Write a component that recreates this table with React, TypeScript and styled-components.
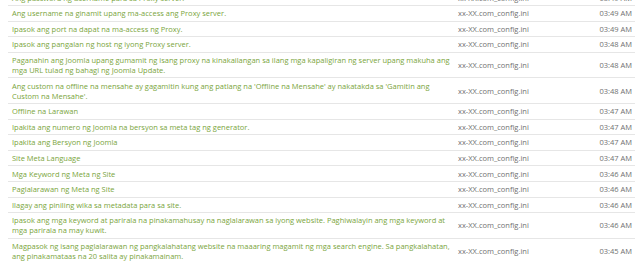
import React from "react";
import styled, { createGlobalStyle } from "styled-components";

const Global = createGlobalStyle`
  html, body { margin: 0; padding: 0; background: #ffffff; overflow: hidden; }
  body { font-family: "Open Sans", "Noto Sans", sans-serif; }
`;

const Page = styled.div`
  padding-left: 8px;
  width: 627px;
  margin-top: -10.6px;
`;

const Table = styled.table`
  width: 627px;
  border-collapse: collapse;
  table-layout: fixed;
  font-size: 7.5px;
  line-height: 10px;
`;

const Row = styled.tr``;

const Cell = styled.td<{ $kind: "desc" | "file" | "time" }>`
  border-top: 1px solid #e6e6e6;
  padding: 2.3px 3px 2.3px 4px;
  vertical-align: middle;
  color: ${(p) => (p.$kind === "desc" ? "#7aa53c" : "#707070")};
  text-align: ${(p) => (p.$kind === "time" ? "right" : "left")};
  white-space: ${(p) => (p.$kind === "desc" ? "normal" : "nowrap")};
`;

const rows: [string, string][] = [
  ["Ang password ng username para sa Proxy server.", "03:49 AM"],
  ["Ang username na ginamit upang ma-access ang Proxy server.", "03:49 AM"],
  ["Ipasok ang port na dapat na ma-access ng Proxy.", "03:49 AM"],
  ["Ipasok ang pangalan ng host ng iyong Proxy server.", "03:48 AM"],
  [
    "Paganahin ang Joomla upang gumamit ng isang proxy na kinakailangan sa ilang mga kapaligiran ng server upang makuha ang mga URL tulad ng bahagi ng Joomla Update.",
    "03:48 AM",
  ],
  [
    "Ang custom na offline na mensahe ay gagamitin kung ang patlang na 'Offline na Mensahe' ay nakatakda sa 'Gamitin ang Custom na Mensahe'.",
    "03:48 AM",
  ],
  ["Offline na Larawan", "03:47 AM"],
  ["Ipakita ang numero ng Joomla na bersyon sa meta tag ng generator.", "03:47 AM"],
  ["Ipakita ang Bersyon ng Joomla", "03:47 AM"],
  ["Site Meta Language", "03:47 AM"],
  ["Mga Keyword ng Meta ng Site", "03:46 AM"],
  ["Paglalarawan ng Meta ng Site", "03:46 AM"],
  ["Ilagay ang piniling wika sa metadata para sa site.", "03:46 AM"],
  [
    "Ipasok ang mga keyword at parirala na pinakamahusay na naglalarawan sa iyong website. Paghiwalayin ang mga keyword at mga parirala na may kuwit.",
    "03:46 AM",
  ],
  [
    "Magpasok ng isang paglalarawan ng pangkalahatang website na maaaring magamit ng mga search engine. Sa pangkalahatan, ang pinakamataas na 20 salita ay pinakamainam.",
    "03:45 AM",
  ],
];

export default function App() {
  return (
    <>
      <Global />
      <Page>
        <Table>
          <colgroup>
            <col style={{ width: 446 }} />
            <col style={{ width: 126 }} />
            <col style={{ width: 55 }} />
          </colgroup>
          <tbody>
            {rows.map(([desc, time], i) => (
              <Row key={i}>
                <Cell $kind="desc">{desc}</Cell>
                <Cell $kind="file">xx-XX.com_config.ini</Cell>
                <Cell $kind="time">{time}</Cell>
              </Row>
            ))}
          </tbody>
        </Table>
      </Page>
    </>
  );
}
